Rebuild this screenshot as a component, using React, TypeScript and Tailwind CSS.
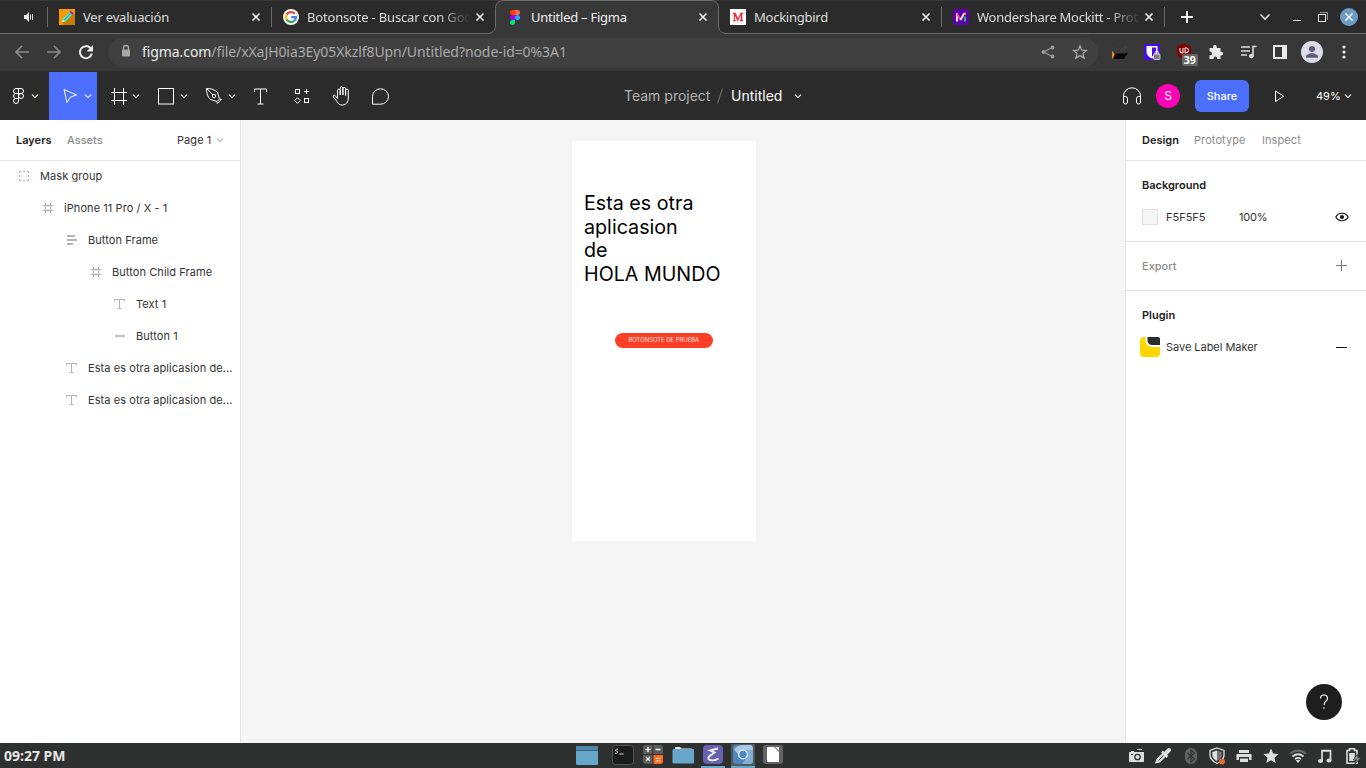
import type { ReactNode } from "react";

type IconProps = { w?: number; h?: number; className?: string; children: ReactNode };

function Icon({ w = 16, h = 16, className = "", children }: IconProps) {
  return (
    <svg width={w} height={h} viewBox={`0 0 ${w} ${h}`} fill="none" stroke="currentColor" className={`shrink-0 ${className}`}>
      {children}
    </svg>
  );
}

const Chevron = ({ className = "" }: { className?: string }) => (
  <Icon w={8} h={8} className={className}>
    <path d="M1 2.7 4 5.6 7 2.7" strokeWidth="1.1" />
  </Icon>
);

/* ---------- Browser tabs ---------- */

type TabProps = { icon: ReactNode; title: string; text: string; width: string; close?: string; fade?: boolean; active?: boolean; sep?: boolean };

function Tab({ icon, title, text, width, close = "ml-[3px]", fade, active, sep }: TabProps) {
  return (
    <div className={`relative flex h-[34px] shrink-0 items-center pl-[11px] ${width}`}>
      {active && (
        <svg width="240" height="35" viewBox="0 0 240 35" className="absolute top-0 -left-[9px]">
          <path d="M0 35V33.5C5 33.5 8.5 31 8.5 25V8.500C8.500 3.500 11.500.5 16.500.5H224C229 .5 231.500 3.500 231.500 8.500V25C231.500 31 235 33.500 240 33.500V35Z" fill="#383838" />
          <path d="M0 33.500C5 33.500 8.500 31 8.500 25V8.500C8.500 3.500 11.500.5 16.500.5H224C229 .5 231.500 3.500 231.500 8.500V25C231.500 31 235 33.500 240 33.500" fill="none" stroke="#6e6e6e" />
        </svg>
      )}
      <div className="relative flex h-4 w-4 shrink-0">{icon}</div>
      <div className={`relative ml-2 w-[161px] shrink-0 text-[13px] leading-[18px] whitespace-nowrap ${text} ${fade ? "[mask-image:linear-gradient(to_right,#000_132px,transparent_163px)]" : ""}`}>
        {title}
      </div>
      <Icon w={16} className={`relative -mt-px text-[#f0f0f0] ${close}`}>
        <path d="M4.500 4.500 11.500 11.500M11.500 4.500 4.500 11.500" strokeWidth="1.700" />
      </Icon>
      {sep && <div className="ml-auto h-5 w-px bg-[#686868]" />}
    </div>
  );
}

const FigmaLogo = () => (
  <Icon className="stroke-none">
    <path d="M8 1H5.500a2.500 2.500 0 0 0 0 5H8z" fill="#ff3d00" />
    <path d="M8 1h2.500a2.500 2.500 0 0 1 0 5H8z" fill="#ff6a57" />
    <path d="M8 6H5.500a2.500 2.500 0 0 0 0 5H8z" fill="#aa00ff" />
    <circle cx="10.500" cy="8.500" r="2.500" fill="#22b0ff" />
    <path d="M8 11H5.500A2.500 2.500 0 1 0 8 13.500z" fill="#00e676" />
  </Icon>
);

const PencilLogo = () => (
  <Icon className="stroke-none">
    <path d="M0 0H16V16H0z" fill="#f59b00" />
    <path d="M14 3.500 16 5.500V16H5L3 13.500z" fill="#c87d00" />
    <path d="M3 13 3.800 9.800 10.500 3 13.300 5.800 6.500 12.500z" fill="#52dfcf" />
    <path d="M5 11.200 11.800 4.400" stroke="#178c88" strokeWidth=".8" />
    <path d="M10.500 3 12 1.700 14.500 4.200 13.300 5.800z" fill="#b218c8" />
    <path d="M2.800 13.400 3.600 10.500 5.800 12.600z" fill="#ffe0b0" />
  </Icon>
);

const GoogleLogo = () => (
  <Icon className="stroke-none">
    <circle cx="8" cy="8" r="8" fill="#fff" />
    <g fill="none" strokeWidth="2.200">
      <path d="M11.800 4.700A5 5 0 0 0 3.700 5.600" stroke="#ea4335" />
      <path d="M3.700 5.600A5 5 0 0 0 3.700 10.500" stroke="#fbbc05" />
      <path d="M3.700 10.500A5 5 0 0 0 11.200 11.900" stroke="#34a853" />
      <path d="M11.200 11.900A5 5 0 0 0 13 8.200H8.200" stroke="#4285f4" />
    </g>
  </Icon>
);

const MockittLogo = () => (
  <Icon className="stroke-none">
    <rect width="16" height="16" rx="2.500" fill="#5e00a8" />
    <g fill="none" strokeWidth="1.700">
      <path d="M4 12.500V4" stroke="#fff" />
      <path d="M4 4.500 7.500 11" stroke="#ff3fa0" />
      <path d="M7.500 11 11 4.500" stroke="#fff" />
      <path d="M12 12.500V7.500" stroke="#25d8a0" />
      <path d="M12 3.500V6" stroke="#ffb31f" />
    </g>
  </Icon>
);

function TabStrip() {
  return (
    <div className="flex h-[34px] items-center border-t border-b border-t-[#383838] border-b-[#6e6e6e] bg-[#2b2b2b]">
      <div className="-mt-px flex h-[34px] w-12 shrink-0 items-center justify-end">
        <Icon w={12} h={12} className="mr-3 text-[#e6e6e6]">
          <path d="M1 4h2l3-3v10L3 8H1z" fill="currentColor" stroke="none" />
          <path d="M7.500 3.500v5M9.500 3v6" />
        </Icon>
        <div className="h-5 w-px bg-[#686868]" />
      </div>
      <Tab width="w-[224px]" title="Ver evaluación" text="text-[#dedede] tracking-[-0.2px]" close="ml-1" sep icon={<PencilLogo />} />
      <Tab width="w-[224px]" title="Botonsote - Buscar con Goo" text="text-[#dedede] tracking-[-0.18px]" close="ml-1" fade icon={<GoogleLogo />} />
      <Tab width="w-[223px]" title="Untitled – Figma" text="text-[#f0f0f0] tracking-[-0.25px]" active icon={<FigmaLogo />} />
      <Tab
        width="w-[223px]"
        title="Mockingbird"
        text="text-[#dedede] tracking-[-0.25px]"
        sep
        icon={<div className="flex h-4 w-4 items-center justify-center bg-white font-['Liberation_Serif',serif] text-[12px] leading-none text-[#e02020] [-webkit-text-stroke:0.35px_#e02020]">M</div>}
      />
      <Tab width="w-[223px]" title="Wondershare Mockitt - Prot" text="text-[#dedede] tracking-[-0.27px]" fade sep icon={<MockittLogo />} />
      <Icon w={14} h={14} className="ml-[15px] text-[#f0f0f0]">
        <path d="M7 1v12M1 7h12" strokeWidth="2" />
      </Icon>
      <Icon w={12} h={12} className="ml-[65px] text-[#e0e0e0]">
        <path d="M1.500 3.500 6 8 10.500 3.500" strokeWidth="1.600" />
      </Icon>
      <Icon w={10} h={12} className="ml-[21px] text-[#e8e8e8]">
        <path d="M1 9.500h8" />
      </Icon>
      <Icon w={12} h={12} className="ml-[15px] text-[#e8e8e8]">
        <path d="M3 1.500h7.500V9" opacity=".55" />
        <rect x="1.500" y="3.500" width="7" height="7" />
      </Icon>
      <Icon w={18} h={18} className="ml-[11px] text-white">
        <circle cx="9" cy="9" r="9" fill="#6c9cc4" stroke="none" />
        <path d="m5.500 5.500 7 7M12.500 5.500l-7 7" strokeWidth="1.500" />
      </Icon>
    </div>
  );
}

/* ---------- Address bar ---------- */

function AddressBar() {
  return (
    <div className="flex h-[37px] items-center bg-[#383838] pb-px pl-[14px]">
      <Icon className="text-[#8a8a8a]">
        <path d="M15 8H2M8 2 2 8l6 6" strokeWidth="1.700" />
      </Icon>
      <Icon className="ml-4 text-[#8a8a8a]">
        <path d="M1 8h13M8 2l6 6-6 6" strokeWidth="1.700" />
      </Icon>
      <Icon className="ml-4 text-[#ececec]">
        <path d="M12.500 4.200A6 6 0 1 0 13.800 9.500" strokeWidth="2" />
        <path d="M15 1v6.500H8.500z" fill="currentColor" stroke="none" />
      </Icon>
      <div className="mt-px ml-[14px] flex h-[29px] w-[990px] shrink-0 items-center rounded-full bg-[#404040] pb-px pl-3">
        <Icon w={12} h={14} className="-mt-0.5 text-[#a9a9a9]">
          <path d="M3.500 6V4a2.500 2.500 0 0 1 5 0v2" strokeWidth="1.400" />
          <rect x="2" y="5.500" width="8" height="7" rx="1" fill="currentColor" stroke="none" />
        </Icon>
        <div className="ml-2.5 w-[430px] text-[14px] leading-5 tracking-[-0.08px] whitespace-nowrap text-[#aaaaaa]">
          <span className="text-[#ececec]">figma.com</span>/file/xXaJH0ia3Ey05Xkzlf8Upn/Untitled?node-id=0%3A1
        </div>
        <Icon w={14} h={14} className="ml-auto text-[#9c9c9c]">
          <path d="M11.500 2.500 2.500 7l9 4.500" strokeWidth="1.300" />
          <g fill="currentColor" stroke="none">
            <circle cx="11.500" cy="2.500" r="1.900" />
            <circle cx="2.500" cy="7" r="1.900" />
            <circle cx="11.500" cy="11.500" r="1.900" />
          </g>
        </Icon>
        <Icon className="mr-[10px] ml-[17px] text-[#a8a8a8]">
          <path d="m8 1.800 1.800 4.400 4.700.3-3.600 3 1.200 4.600L8 11.600l-4.100 2.500 1.200-4.600-3.600-3 4.700-.3z" strokeWidth="1.300" />
        </Icon>
      </div>
      <Icon w={18} h={16} className="ml-[13px] stroke-none">
        <path d="M1 7 3 9 3.500 12V15H1z" fill="#f08a10" />
        <path d="M1.500 15 3 12l2-2.500h9.500L16.500 8.500 16 11l-1.500.5-1 3.500z" fill="#050505" />
        <path d="m2 3.500 2 1M5 6l3-1.500 2.500.5L16 2.500M9 7l6-2" stroke="#444" />
      </Icon>
      <Icon w={17} h={17} className="ml-[15px] stroke-none">
        <path d="M0 0h16v16H0z" fill="#4a08e8" />
        <path d="M2.500 2h11v6c0 3-2 5-5.500 6.500C4.500 13 2.500 11 2.500 8z" fill="#fff" />
        <path d="M8 3.500h4V8c0 2-1.500 3.500-4 4.500z" fill="#4a08e8" />
        <rect x="9.500" y="10" width="6.500" height="5.500" rx="1" fill="#7b7b7b" stroke="#fff" strokeWidth=".7" />
        <path d="M11 10V8.700a1.800 1.800 0 0 1 3.600 0V10" fill="none" stroke="#ddd" />
      </Icon>
      <div className="relative ml-[15px] h-[22px] w-[22px] shrink-0">
        <svg width="16" height="18" viewBox="0 0 16 18" className="absolute top-0.5 left-0">
          <path d="M8 1 15 3v6c0 4-3 6.500-7 8-4-1.500-7-4-7-8V3z" fill="#800000" />
          <path d="M4 5v3q0 2 2 2h1V5M9 10V5h1.500q2 0 2 2.500T9 10" fill="none" stroke="#fff" />
        </svg>
        <div className="absolute top-[13px] left-1.5 flex h-3 w-[15.500px] items-center justify-center rounded-[2px] bg-[#666] text-[10.500px] leading-none font-bold text-white">39</div>
      </div>
      <Icon w={16} h={16} className="ml-[10px] stroke-none">
        <path d="M1.500 4H5V2.900a1.900 1.900 0 0 1 3.800 0V4h3.700v3.700h.7a1.900 1.900 0 0 1 0 3.800h-.7V15H9.200v-.8a1.800 1.800 0 0 0-3.600 0v.8H1.500v-3.700h.6a1.850 1.850 0 0 0 0-3.700h-.6z" fill="#e8e8e8" />
      </Icon>
      <Icon w={18} className="ml-4 text-[#dcdcdc]">
        <path d="M1 3h9M1 7h9M1 11h6" strokeWidth="1.600" />
        <path d="M13 12.500V2.500h3.500" strokeWidth="1.600" />
        <circle cx="11.300" cy="12" r="2.300" fill="currentColor" stroke="none" />
      </Icon>
      <Icon w={14} h={14} className="ml-[15px] text-[#ececec]">
        <path d="M0 0h14v14H0zM2 2v10h7V2z" fill="currentColor" fillRule="evenodd" stroke="none" />
      </Icon>
      <Icon w={22} h={22} className="ml-[14px] stroke-none">
        <circle cx="11" cy="11" r="11" fill="#dcdde6" />
        <circle cx="11" cy="8" r="3" fill="#5a5e78" />
        <path d="M5 16.800v-1.300c0-2 3.500-3.300 6-3.300s6 1.300 6 3.300v1.300z" fill="#5a5e78" />
      </Icon>
      <Icon w={4} h={16} className="ml-[19px] stroke-none">
        <g fill="#ececec">
          <circle cx="2" cy="3" r="1.600" />
          <circle cx="2" cy="8" r="1.600" />
          <circle cx="2" cy="13" r="1.600" />
        </g>
      </Icon>
    </div>
  );
}

/* ---------- Editor toolbar ---------- */

function EditorToolbar() {
  return (
    <div className="flex h-[49px] items-center bg-[#2c2c2c] pt-px text-white">
      <div className="flex w-[49px] shrink-0 items-center pl-3">
        <Icon w={13} h={18}>
          <path d="M6.500 1.500h-2.500a2.500 2.500 0 0 0 0 5h2.500zM6.500 1.500H9a2.500 2.500 0 0 1 0 5H6.500M6.500 6.500h-2.500a2.500 2.500 0 0 0 0 5h2.500M6.500 6.500v7.500A2.500 2.500 0 1 1 4 11.500" />
          <circle cx="9" cy="9" r="2.500" />
        </Icon>
        <Chevron className="ml-1.5" />
      </div>
      <div className="flex h-12 w-12 shrink-0 items-center bg-[#4c6fff] pl-[14px]">
        <Icon w={15} h={16}>
          <path d="m1 1.500 12.500 5.500-6 2L4 14.500z" />
        </Icon>
        <Chevron className="ml-1.5" />
      </div>
      <div className="flex w-12 shrink-0 items-center pl-[14px]">
        <Icon w={16} h={17}>
          <path d="M3.500 0v17M12.500 0v17M0 4.500h16M0 12.500h16" />
        </Icon>
        <Chevron className="ml-[5px]" />
      </div>
      <div className="flex w-12 shrink-0 items-center pl-3">
        <Icon w={18} h={17}>
          <rect x="1.500" y=".5" width="15" height="15.500" />
        </Icon>
        <Chevron className="ml-[5px]" />
      </div>
      <div className="flex w-12 shrink-0 items-center pl-3">
        <Icon w={18} h={18}>
          <path d="M1.500 1.500C6 1.500 10 2.500 12.500 5.500L14.500 12 12 14.500 5.500 12.500C2.500 10 1.500 6 1.500 1.500zM1.500 1.500 8 8M12.300 16.500l4.200-4.200M15 12l1.500.5M12 14.800l.5 1.700" />
          <circle cx="9" cy="9" r="1.700" />
        </Icon>
        <Chevron className="ml-[5px]" />
      </div>
      <Icon w={15} h={17} className="ml-[12px]">
        <path d="M1.500 4V1h12v3M7.500 1v15M4.500 16h6" />
      </Icon>
      <Icon w={16} h={17} className="ml-[26px]">
        <rect x="1.500" y="1.500" width="4" height="4" />
        <path d="M12.500 1v5M10 3.500h5M3.500 9.700 6.300 12.500 3.500 15.300.7 12.500z" />
        <rect x="10.500" y="10.500" width="4" height="4" />
      </Icon>
      <Icon w={19} h={20} className="ml-[22px]">
        <path d="M5.500 12.500V4.500a1.300 1.300 0 0 1 2.700 0V9 2.200a1.300 1.300 0 0 1 2.700 0V9 2.800a1.300 1.300 0 0 1 2.700 0V9.500 4.500a1.300 1.300 0 0 1 2.700 0V12c0 4-2 7-6 7-2.500 0-4-1-5-3L1.300 10.800c-.6-1.300.8-2.300 1.900-1.200z" />
      </Icon>
      <Icon w={19} h={19} className="ml-5">
        <path d="M1.500 17.200V9.500a8 7.700 0 1 1 8 7.700z" />
      </Icon>
      <div className="ml-[234px] flex w-[180px] shrink-0 items-center text-[14px] leading-5 whitespace-nowrap">
        <span className="w-[87px] text-[#b3b3b3]">Team project</span>
        <Icon w={6} h={16} className="ml-1.5 text-[#777]">
          <path d="M.5 15.500 5.500.5" />
        </Icon>
        <span className="ml-2 w-[53px]">Untitled</span>
        <Chevron className="ml-[10px]" />
      </div>
      <Icon w={20} h={18} className="ml-[318px]">
        <path d="M1.500 15V9a8.500 8.200 0 0 1 17 0v6M1.500 9.500h2q2 0 2 2v3.500q0 2-2 2t-2-2zM18.500 9.500h-2q-2 0-2 2v3.500q0 2 2 2t2-2z" />
      </Icon>
      <div className="ml-[14px] flex h-6 w-6 shrink-0 items-center justify-center rounded-full bg-[#ff00b7] text-[12px]">S</div>
      <div className="ml-[15px] flex h-8 w-[54px] shrink-0 items-center justify-center rounded-[6px] bg-[#4c6fff] text-[11px] font-medium">Share</div>
      <Icon w={12} h={14} className="ml-[25px]">
        <path d="M1.500 2v10.500L9.700 7.200z" />
      </Icon>
      <div className="ml-[30px] w-[23px] text-[11px] whitespace-nowrap">49%</div>
      <Chevron className="ml-[5px]" />
    </div>
  );
}

/* ---------- Layers panel ---------- */

const FrameGlyph = () => (
  <Icon w={12} h={12}>
    <path d="M3.500.5v11M8.500.5v11M.5 3.500h11M.5 8.500h11" />
  </Icon>
);
const TextGlyph = () => (
  <Icon w={12} h={12}>
    <path d="M.5 3.500v-2h10v2M5.500 1.500V11M3.500 10.500h4" />
  </Icon>
);

type Layer = { name: string; pad: string; glyph: ReactNode };

const layers: Layer[] = [
  {
    name: "Mask group",
    pad: "pl-[18px]",
    glyph: (
      <Icon w={12} h={12}>
        <path d="M1.500 3V1.500H3M9 1.500h1.500V3M10.500 9v1.500H9M3 10.500H1.500V9M5 1.500h2M5 10.500h2M1.500 5v2M10.500 5v2" />
      </Icon>
    ),
  },
  { name: "iPhone 11 Pro / X - 1", pad: "pl-[42px]", glyph: <FrameGlyph /> },
  { name: "Button Frame", pad: "pl-[66px]", glyph: <Icon w={12} h={12}><path d="M1 2h8M1 6h10M1 10h6" strokeWidth="2" /></Icon> },
  { name: "Button Child Frame", pad: "pl-[90px]", glyph: <FrameGlyph /> },
  { name: "Text 1", pad: "pl-[114px]", glyph: <TextGlyph /> },
  { name: "Button 1", pad: "pl-[114px]", glyph: <Icon w={12} h={12}><path d="M1 6h10" strokeWidth="2.500" opacity=".8" /></Icon> },
  { name: "Esta es otra aplicasion de...", pad: "pl-[66px]", glyph: <TextGlyph /> },
  { name: "Esta es otra aplicasion de...", pad: "pl-[66px]", glyph: <TextGlyph /> },
];

function LayersPanel() {
  return (
    <aside className="w-[241px] shrink-0 border-r border-[#e5e5e5] bg-white text-[11px] text-[#333]">
      <div className="flex h-[41px] items-center border-b border-[#e5e5e5] pl-4">
        <span className="w-[51px] font-semibold text-[#222]">Layers</span>
        <span className="w-[110px] font-medium text-[#8c8c8c]">Assets</span>
        <span className="w-[39px] tracking-[0.08px] whitespace-nowrap">Page 1</span>
        <Chevron className="text-[#b0b0b0]" />
      </div>
      {layers.map((layer, i) => (
        <div key={i} className={`flex h-8 items-center gap-[10px] text-[#b3b3b3] ${layer.pad} ${i === 0 ? "-mt-px" : ""}`}>
          {layer.glyph}
          <span className="tracking-[0.07px] whitespace-nowrap text-[#333]">{layer.name}</span>
        </div>
      ))}
    </aside>
  );
}

/* ---------- Canvas ---------- */

function Canvas() {
  return (
    <main className="flex min-w-0 flex-1 bg-[#f5f5f5] pt-[21px] pl-[331px]">
      <div className="h-[399.500px] w-[184px] bg-white pt-[51px] pl-3">
        <p className="text-[19.700px] leading-[23.600px] whitespace-nowrap text-black">
          Esta es otra
          <br />
          aplicasion
          <br />
          de
          <br />
          HOLA MUNDO
        </p>
        <div className="mt-[47px] ml-[30.500px] flex h-[15px] w-[98.500px] items-center justify-center rounded-full bg-[#ff3e28] text-[5.900px] whitespace-nowrap text-[#ffe3df]">
          BOTONSOTE DE PRUEBA
        </div>
      </div>
    </main>
  );
}

/* ---------- Design panel ---------- */

function DesignPanel() {
  return (
    <aside className="flex w-[241px] shrink-0 flex-col border-l border-[#e5e5e5] bg-white text-[11px] text-[#333]">
      <div className="flex h-[41px] items-center border-b border-[#e5e5e5] pl-4">
        <span className="w-[52px] font-semibold text-[#222]">Design</span>
        <span className="w-[68px] tracking-[0.08px] text-[#8c8c8c]">Prototype</span>
        <span className="tracking-[0.08px] text-[#8c8c8c]">Inspect</span>
      </div>
      <section className="h-[81px] border-b border-[#e5e5e5] pt-2 pl-4">
        <h2 className="flex h-8 items-center font-semibold text-[#222]">Background</h2>
        <div className="flex h-8 items-center">
          <div className="h-4 w-4 border border-[#e0e0e0] bg-[#f5f5f5]" />
          <span className="ml-2 w-[73px]">F5F5F5</span>
          <span className="w-[96px] tracking-[-0.2px]">100%</span>
          <Icon w={14} h={10} className="text-[#111]">
            <path d="M.8 5C3.500 0 10.500 0 13.200 5 10.500 10 3.500 10 .8 5z" strokeWidth="1.200" />
            <circle cx="7" cy="5" r="2" fill="currentColor" stroke="none" />
          </Icon>
        </div>
      </section>
      <section className="flex h-[49px] items-center border-b border-[#e5e5e5] pl-4">
        <span className="w-[193px] font-medium text-[#8c8c8c]">Export</span>
        <Icon w={13} h={13} className="-mt-px text-[#777]">
          <path d="M6.500 1v11M1 6.500h11" />
        </Icon>
      </section>
      <section className="pt-2 pl-4">
        <h2 className="flex h-8 items-center font-semibold text-[#222]">Plugin</h2>
        <div className="flex h-8 items-center">
          <Icon w={20} h={20} className="-ml-0.5 stroke-none">
            <path d="M4 0h16v16a4 4 0 0 1-4 4H4a4 4 0 0 1-4-4V4a4 4 0 0 1 4-4z" fill="#ffd600" />
            <path d="M5.500 0H20v10h-7.500a7 7 0 0 1-7-7z" fill="#fff" />
            <path d="M7.500 0H18a2 2 0 0 1 2 2v6h-8a4.500 4.500 0 0 1-4.500-4.500z" fill="#2c2c2c" />
          </Icon>
          <span className="ml-1.5 w-[169px] tracking-[-0.04px]">Save Label Maker</span>
          <Icon w={13} h={13} className="text-[#111]">
            <path d="M1 6.500h11" />
          </Icon>
        </div>
      </section>
      <div className="mt-auto mr-[24px] mb-[23px] flex h-9 w-9 items-center justify-center self-end rounded-full bg-[#1e1e1e] text-white">
        <Icon w={12} h={18}>
          <path d="M2.500 5.500A3.500 3.500 0 0 1 9.500 5.500C9.500 8 6 8.500 6 12" strokeWidth="1.100" />
          <circle cx="6" cy="15" r=".8" fill="currentColor" stroke="none" />
        </Icon>
      </div>
    </aside>
  );
}

/* ---------- Desktop panel ---------- */

function Taskbar() {
  return (
    <footer className="flex h-[25px] items-center bg-[#2f3130] text-[#dedede]">
      <div className="w-[575px] shrink-0 pt-px pl-1 text-[14px] leading-none font-bold text-[#e6e6e6]">09:27 PM</div>
      <Icon w={24} h={25} className="stroke-none">
        <rect x="1" y="3" width="22" height="19" rx="1" fill="#67a7ca" />
        <path d="M1 3h22v4H1z" fill="#4f87a8" />
        <path d="M1 7.500h22" stroke="#356580" />
      </Icon>
      <Icon w={24} h={25} className="ml-3 stroke-none">
        <rect x="1.500" y="2.500" width="21" height="19" rx="3" fill="#1c1c1c" stroke="#555" />
        <path d="M7 6.200H5.500q-1 0-1 1t1 1 1 1-1 1H4M8.500 11h4" fill="none" stroke="#ddd" />
      </Icon>
      <Icon w={22} h={25} className="ml-[7px] stroke-none">
        <rect x="1" y="2" width="20" height="19" rx="3" fill="#5c5c5c" />
        <path d="M11 12h10v6a3 3 0 0 1-3 3h-7z" fill="#ff6a1f" />
        <path d="M11 2v19M1 11.500h20" stroke="#303030" />
        <path d="M6 4v5M3.500 6.500h5M13.500 6.500h5M4 14l4 4M8 14l-4 4" stroke="#fff" strokeWidth="1.300" />
        <path d="M13.500 15.500h5M13.500 18h5" stroke="#ffe2d0" />
      </Icon>
      <Icon w={24} h={25} className="ml-[7px] stroke-none">
        <path d="M4 7V5q0-1 1-1h4l2 1.500h9q1 0 1 1z" fill="#e8e8e8" />
        <rect x="1.500" y="6" width="21.500" height="14.500" rx="1" fill="#67a7ca" />
      </Icon>
      <Icon w={24} h={25} className="ml-1.5 stroke-none">
        <rect x="2" y="2" width="20" height="19" rx="4" fill="#6860b0" />
        <path d="M17 5.500 9 7.500 13.500 9.500 8 13.500Q6 16.500 10 17.200T17.500 15.500" fill="none" stroke="#f4f4f4" strokeWidth="1.900" />
        <path d="M0 23h24v2H0z" fill="#67a7ca" />
      </Icon>
      <Icon w={24} h={25} className="ml-1.5 stroke-none">
        <path d="M0 1h24v22H0z" fill="#535958" />
        <rect x="2" y="2" width="20" height="19" rx="3" fill="#4e87be" />
        <path d="M3 6.500Q6 2 12 2h7q3 0 3 4v1H12q-4 0-5 4z" fill="#a9c9e5" />
        <path d="m16 14-5 7h8q3 0 3-3V7h-7z" fill="#82afd8" />
        <circle cx="12" cy="11.500" r="5" fill="#edf4fa" />
        <circle cx="12" cy="11.500" r="3.700" fill="#4b88c6" />
        <path d="M0 23h24v2H0z" fill="#67a7ca" />
      </Icon>
      <Icon w={20} h={25} className="ml-2 stroke-none">
        <rect x="0" y="2" width="20" height="19" rx="3" fill="#646464" />
        <path d="M4 4h7l5 5v10H4z" fill="#fff" />
        <path d="M12 4h4v4z" fill="#ececec" />
      </Icon>
      <Icon w={16} h={16} className="ml-[345px] stroke-none">
        <path d="M1 4h2V3h3v1h10v10H1z" fill="currentColor" />
        <path d="M9 1.500h5" stroke="currentColor" />
        <circle cx="9.500" cy="9" r="2.700" fill="none" stroke="#2f3130" strokeWidth="1.300" />
        <path d="M3 6.500h2" stroke="#2f3130" />
      </Icon>
      <Icon w={18} h={18} className="ml-[10px]">
        <path d="M1 16.500 2.500 12 8.500 6l3.500 3.500L6 15.500z" fill="currentColor" stroke="none" />
        <path d="M4.500 13.500 9.500 8.500" stroke="#2f3130" />
        <path d="m8 4.500 5.500 5.500" strokeWidth="2.500" />
        <path d="M11.500 6.500 15 3" strokeWidth="4" strokeLinecap="round" />
      </Icon>
      <Icon w={14} h={18} className="ml-3">
        <rect x="1" y="1" width="12" height="16" rx="6" fill="#646464" stroke="none" />
        <path d="m3.500 6 7 6L7 15V3l3.500 3-7 6" stroke="#303130" strokeWidth="1.200" />
      </Icon>
      <Icon w={18} h={18} className="ml-[10px] stroke-none">
        <path d="m9 1 7 2.500V8c0 4-3 6.500-7 8.500C5 14.500 2 12 2 8V3.500z" fill="#303130" stroke="#e0e0e0" strokeWidth="1.300" />
        <path d="M9 3.500v10.500C6 12.500 4.300 10.800 4.300 8V5z" fill="#e0e0e0" />
        <path d="M9 3.500v10.500c3-1.500 4.700-3.200 4.700-6V5z" fill="#777" />
        <circle cx="14" cy="14.500" r="3" fill="#e06a32" />
      </Icon>
      <Icon w={16} h={16} className="ml-[10px] stroke-none">
        <path d="M3 2h10v3H3zM.5 6h15v6H13V9H3v3H.5zM4 10.500h8V14H4z" fill="currentColor" />
      </Icon>
      <Icon w={16} h={16} className="ml-[11px] stroke-none">
        <path d="m8 .5 2.200 5 5.300.5-4 3.700 1.200 5.300L8 12.300 3.300 15l1.200-5.300L.5 6l5.300-.5z" fill="currentColor" />
      </Icon>
      <Icon w={18} h={16} className="ml-[10px]">
        <path d="M1 5.800Q9-.5 17 5.800" stroke="#686868" strokeWidth="2" />
        <path d="M3.500 8.500Q9 4 14.500 8.500M6 11.200q3-2.500 6 0" strokeWidth="1.700" />
        <path d="m6.800 12.500 2.200 2.500 2.200-2.500q-2.200-1.500-4.400 0" fill="currentColor" stroke="none" />
      </Icon>
      <Icon w={16} h={16} className="ml-2.5">
        <path d="M5 12.500V2.500h8.500V12M5 3h8.500" strokeWidth="1.700" />
        <ellipse cx="3.500" cy="13" rx="2.500" ry="2" fill="currentColor" stroke="none" />
        <ellipse cx="12" cy="12.500" rx="2.500" ry="2" fill="currentColor" stroke="none" />
      </Icon>
      <Icon w={17} h={18} className="ml-3">
        <path d="M2 3.500h2.500V1.700h5v1.800H12V16.300H2z" strokeWidth="1.600" />
        <path d="M4.200 6h5.600v8H4.200z" fill="currentColor" stroke="none" />
        <path d="m12.500 7-4.500 6h3.500L9.500 17.500l6.500-7h-3.500z" fill="#888" stroke="#2f3130" strokeWidth=".6" />
      </Icon>
    </footer>
  );
}

export default function App() {
  return (
    <div className="flex h-[768px] w-[1366px] flex-col overflow-hidden font-[Inter,sans-serif]">
      <header className="shrink-0 font-['Noto_Sans',sans-serif]">
        <TabStrip />
        <AddressBar />
      </header>
      <EditorToolbar />
      <div className="flex min-h-0 flex-1">
        <LayersPanel />
        <Canvas />
        <DesignPanel />
      </div>
      <div className="shrink-0 font-['Noto_Sans',sans-serif]">
        <Taskbar />
      </div>
    </div>
  );
}
